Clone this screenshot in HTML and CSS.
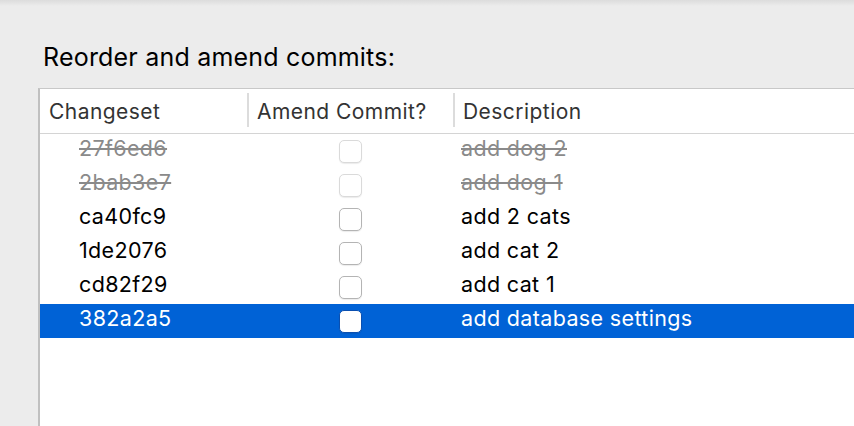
FILE: index.html
```html
<!DOCTYPE html>
<html>
<head>
<meta charset="utf-8">
<link rel="stylesheet" href="styles.css">
</head>
<body>
<div class="topshade"></div>
<h1 class="title">Reorder and amend commits:</h1>
<div class="table">
  <div class="row head">
    <div class="cell c1">Changeset</div>
    <div class="cell c2 sep">Amend Commit?</div>
    <div class="cell c3 sep">Description</div>
  </div>
  <div class="row dropped">
    <div class="cell c1">27f6ed6</div>
    <div class="cell c2"><span class="box"></span></div>
    <div class="cell c3">add dog 2</div>
  </div>
  <div class="row dropped">
    <div class="cell c1">2bab3e7</div>
    <div class="cell c2"><span class="box"></span></div>
    <div class="cell c3">add dog 1</div>
  </div>
  <div class="row">
    <div class="cell c1">ca40fc9</div>
    <div class="cell c2"><span class="box"></span></div>
    <div class="cell c3">add 2 cats</div>
  </div>
  <div class="row">
    <div class="cell c1">1de2076</div>
    <div class="cell c2"><span class="box"></span></div>
    <div class="cell c3">add cat 2</div>
  </div>
  <div class="row">
    <div class="cell c1">cd82f29</div>
    <div class="cell c2"><span class="box"></span></div>
    <div class="cell c3">add cat 1</div>
  </div>
  <div class="row selected">
    <div class="cell c1">382a2a5</div>
    <div class="cell c2"><span class="box"></span></div>
    <div class="cell c3">add database settings</div>
  </div>
</div>
</body>
</html>
```
FILE: styles.css
```css
html, body {
  margin: 0;
  padding: 0;
  height: 100%;
  overflow: hidden;
}
body {
  background: #ececec;
  font-family: Inter, "Liberation Sans", Arial, sans-serif;
  display: flex;
  flex-direction: column;
}
.topshade {
  height: 6px;
  background: linear-gradient(#dcdcdc, #ececec);
  flex: none;
}
.title {
  margin: 36px 0 0 43px;
  font-size: 25px;
  letter-spacing: 0.2px;
  font-weight: normal;
  line-height: 30px;
  color: #000;
  flex: none;
}
.table {
  margin: 16px 0 0 38px;
  flex: 1;
  background: #fff;
  border-left: 2px solid #c0c0c0;
  border-top: 1px solid #c8c8c8;
}
.row {
  display: grid;
  grid-template-columns: 207px 206px 1fr;
  height: 34px;
  align-items: center;
  font-size: 21.5px;
  letter-spacing: 0.35px;
  color: #000;
}
.row.head {
  height: 44px;
  border-bottom: 1px solid #d4d4d4;
  color: #333;
  font-size: 21px;
  letter-spacing: 0.45px;
}
.cell {
  white-space: nowrap;
  height: 100%;
  display: flex;
  align-items: center;
  box-sizing: border-box;
}
.row:not(.head) .c1, .row:not(.head) .c3 { padding-bottom: 7px; }
.head .c1 { padding-left: 9px; }
.head .c2 { padding-left: 10px; justify-content: flex-start; }
.head .c3 { padding-left: 10px; }
.sep { position: relative; }
.sep::before {
  content: "";
  position: absolute;
  left: 0;
  top: 4px;
  bottom: 6px;
  width: 2px;
  background: #dcdcdc;
}
.c1 { padding-left: 39px; }
.c2 { justify-content: center; }
.c3 { padding-left: 8px; }
.box {
  width: 21px;
  height: 21px;
  border: 1px solid #b4b4b4;
  border-radius: 5px;
  background: #fff;
  box-shadow: 0 1px 1px rgba(0,0,0,0.08);
  box-sizing: content-box;
}
.dropped { color: #8a8a8a; }
.dropped .c1, .dropped .c3 { text-decoration: line-through; }
.dropped .box { border-color: #dadada; }
.selected { background: #0062d6; color: #fff; }
.selected .box { border-color: #0a4fb0; }
```
